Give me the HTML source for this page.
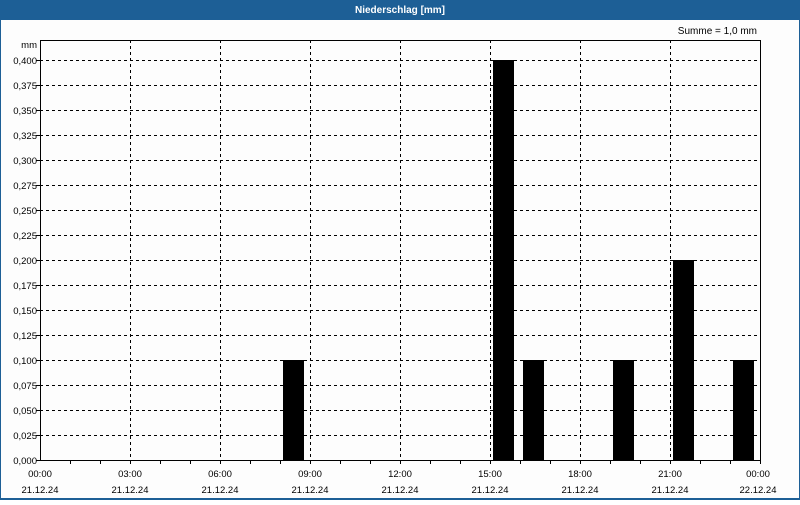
<!DOCTYPE html>
<html><head><style>
body{margin:0;width:800px;height:500px;overflow:hidden;background:#fff}
</style></head><body>
<svg width="800" height="500" xmlns="http://www.w3.org/2000/svg" font-family="Liberation Sans, sans-serif" font-size="9.5">
<rect x="0" y="0" width="800" height="500" fill="#fdfdfd"/>
<rect x="0" y="0" width="800" height="20" fill="#1d5f96"/>
<rect x="0" y="0" width="1" height="500" fill="#1d5f96"/>
<rect x="799" y="0" width="1" height="500" fill="#1d5f96"/>
<rect x="0" y="498" width="800" height="2" fill="#1d5f96"/>
<text x="400" y="13" text-anchor="middle" fill="#fff" font-weight="bold" font-size="10">Niederschlag [mm]</text>
<text x="757" y="34" text-anchor="end" fill="#000" font-size="10">Summe = 1,0 mm</text>
<g stroke="#000" stroke-width="1" stroke-dasharray="3,3" shape-rendering="crispEdges">
<path d="M40 60.5H760M40 85.5H760M40 110.5H760M40 135.5H760M40 160.5H760M40 185.5H760M40 210.5H760M40 235.5H760M40 260.5H760M40 285.5H760M40 310.5H760M40 335.5H760M40 360.5H760M40 385.5H760M40 410.5H760M40 435.5H760"/>
<path d="M130.5 40V460M220.5 40V460M310.5 40V460M400.5 40V460M490.5 40V460M580.5 40V460M670.5 40V460"/>
</g>
<g fill="#000" shape-rendering="crispEdges">
<rect x="283" y="360" width="21" height="100"/>
<rect x="493" y="60" width="21" height="400"/>
<rect x="523" y="360" width="21" height="100"/>
<rect x="613" y="360" width="21" height="100"/>
<rect x="673" y="260" width="21" height="200"/>
<rect x="733" y="360" width="21" height="100"/>
</g>
<g stroke="#000" fill="none" shape-rendering="crispEdges">
<rect x="40.5" y="40.5" width="720" height="420"/>
<path d="M70.5 460v4M100.5 460v4M130.5 460v4M160.5 460v4M190.5 460v4M220.5 460v4M250.5 460v4M280.5 460v4M310.5 460v4M340.5 460v4M370.5 460v4M400.5 460v4M430.5 460v4M460.5 460v4M490.5 460v4M520.5 460v4M550.5 460v4M580.5 460v4M610.5 460v4M640.5 460v4M670.5 460v4M700.5 460v4M730.5 460v4M760.5 460v4"/>
<path d="M36 60.5h4M36 85.5h4M36 110.5h4M36 135.5h4M36 160.5h4M36 185.5h4M36 210.5h4M36 235.5h4M36 260.5h4M36 285.5h4M36 310.5h4M36 335.5h4M36 360.5h4M36 385.5h4M36 410.5h4M36 435.5h4M36 460.5h4"/>
</g>
<g fill="#000" text-anchor="end">
<text x="37" y="48">mm</text>
<text x="37" y="64">0,400</text><text x="37" y="89">0,375</text><text x="37" y="114">0,350</text><text x="37" y="139">0,325</text><text x="37" y="164">0,300</text><text x="37" y="189">0,275</text><text x="37" y="214">0,250</text><text x="37" y="239">0,225</text><text x="37" y="264">0,200</text><text x="37" y="289">0,175</text><text x="37" y="314">0,150</text><text x="37" y="339">0,125</text><text x="37" y="364">0,100</text><text x="37" y="389">0,075</text><text x="37" y="414">0,050</text><text x="37" y="439">0,025</text><text x="37" y="464">0,000</text>
</g>
<g fill="#000" text-anchor="middle">
<text x="40" y="477">00:00</text><text x="40" y="493">21.12.24</text>
<text x="130" y="477">03:00</text><text x="130" y="493">21.12.24</text>
<text x="220" y="477">06:00</text><text x="220" y="493">21.12.24</text>
<text x="310" y="477">09:00</text><text x="310" y="493">21.12.24</text>
<text x="400" y="477">12:00</text><text x="400" y="493">21.12.24</text>
<text x="490" y="477">15:00</text><text x="490" y="493">21.12.24</text>
<text x="580" y="477">18:00</text><text x="580" y="493">21.12.24</text>
<text x="670" y="477">21:00</text><text x="670" y="493">21.12.24</text>
<text x="758" y="477">00:00</text><text x="758" y="493">22.12.24</text>
</g>
</svg>
</body></html>
